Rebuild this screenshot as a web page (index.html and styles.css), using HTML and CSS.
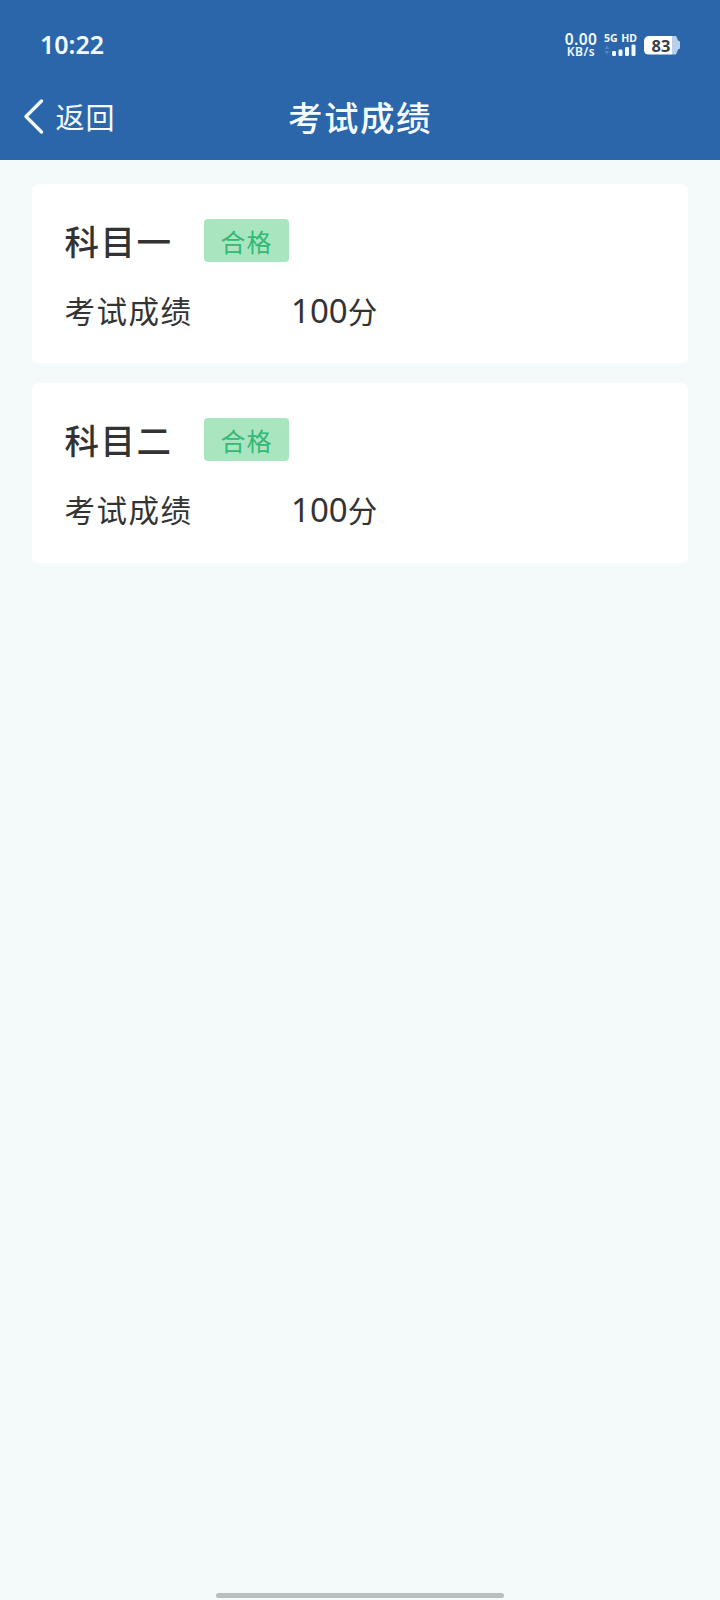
FILE: index.html
```html
<!DOCTYPE html>
<html lang="zh-CN">
<head>
<meta charset="utf-8">
<title>考试成绩</title>
<link rel="stylesheet" href="styles.css">
</head>
<body>
<header class="top">
  <div class="status">
    <span class="clock">10:22</span>
    <div class="indicators">
      <div class="speed"><span class="rate">0.00</span><span class="unit">KB/s</span></div>
      <div class="network">
        <span class="net-label">5G HD</span>
        <svg class="signal" width="32" height="12" viewBox="0 0 32 12">
          <path d="M0.500 5 3 1.500 5.500 5zM0.500 7 3 10.500 5.500 7z" fill="#5385c2"/>
          <g fill="#f1faff"><rect x="8" y="7" width="4" height="5" rx="1.300"/><rect x="14.500" y="5.500" width="4" height="6.500" rx="1.300"/><rect x="21" y="3" width="4" height="9" rx="1.300"/><rect x="27.500" y="0.500" width="4" height="11.500" rx="1.300"/></g>
        </svg>
      </div>
      <div class="battery"><span class="level">83</span></div>
    </div>
  </div>
  <nav class="nav">
    <a class="back">
      <svg class="chevron" width="20" height="36" viewBox="0 0 20 36"><path d="M17.500 3 2 18.500 17.500 34" fill="none" stroke="#f4fbff" stroke-width="3.300" stroke-linecap="round" stroke-linejoin="round"/></svg>
      <span class="back-text">返回</span>
    </a>
    <h1 class="title">考试成绩</h1>
  </nav>
</header>
<main class="list">
  <section class="card">
    <div class="card-head"><h2 class="subject">科目一</h2><span class="badge">合格</span></div>
    <div class="row"><span class="label">考试成绩</span><span class="score"><span class="num">100</span>分</span></div>
  </section>
  <section class="card">
    <div class="card-head"><h2 class="subject">科目二</h2><span class="badge">合格</span></div>
    <div class="row"><span class="label">考试成绩</span><span class="score"><span class="num">100</span>分</span></div>
  </section>
</main>
<footer class="home"><div class="home-bar"></div></footer>
</body>
</html>
```
FILE: styles.css
```css
* { box-sizing: border-box; margin: 0; padding: 0; }
body {
  height: 1600px;
  display: flex;
  flex-direction: column;
  background: #f4f9fa;
  color: #333;
  font-family: "Noto Sans CJK SC", sans-serif;
}
.top { height: 160px; background: #2b65aa; color: #f4fbff; }
.status {
  height: 76px;
  padding: 14px 40px 0 40px;
  display: flex;
  justify-content: space-between;
  align-items: center;
  font-family: "Noto Sans", sans-serif;
}
.clock { font-size: 25px; font-weight: 600; line-height: 30px; margin-top: -3px; }
.indicators { display: flex; align-items: center; }
.speed { width: 36px; display: flex; flex-direction: column; align-items: center; font-weight: 600; margin-right: 5px; }
.rate { font-size: 15.5px; line-height: 13px; height: 13px; letter-spacing: 0.4px; }
.unit { font-size: 12px; line-height: 12px; height: 12px; letter-spacing: 0.5px; }
.network { width: 34px; display: flex; flex-direction: column; margin-right: 6px; margin-top: -3px; }
.net-label { font-size: 10.5px; font-weight: 700; line-height: 12px; white-space: nowrap; word-spacing: 1px; }
.signal { display: block; }
.battery {
  width: 36px;
  height: 19px;
  padding-right: 2px;
  border-radius: 5px;
  background: linear-gradient(to right, #fff 28px, #b9cfea 28px);
  clip-path: polygon(0 0, 32px 0, 34px 5px, 36px 6px, 36px 13px, 34px 14px, 32px 19px, 0 19px);
  color: #3b4046;
  display: flex;
  justify-content: center;
  align-items: center;
}
.level { font-size: 16.5px; font-weight: 700; line-height: 19px; }
.nav { height: 84px; display: grid; grid-template-columns: 1fr 144px 1fr; align-items: center; }
.back { display: flex; align-items: center; padding-left: 24px; margin-top: -4px; }
.back-text { font-size: 29px; line-height: 40px; letter-spacing: 1px; margin-left: 11.5px; }
.title { font-size: 34.5px; font-weight: 500; line-height: 50px; letter-spacing: 1.5px; white-space: nowrap; margin-top: -4px; }
.list { flex: 1; padding: 24px 32px; display: flex; flex-direction: column; gap: 20px; }
.card { height: 179.3px; padding: 35px 32px 0; border-radius: 7px; background: #fff; }
.card-head { height: 43px; display: flex; align-items: center; }
.subject { width: 140px; padding-left: 0.5px; font-size: 34.5px; font-weight: 500; line-height: 42px; letter-spacing: 1.5px; margin-top: -2px; }
.badge {
  width: 85px;
  height: 43px;
  border-radius: 4px;
  background: #a9e6c0;
  color: #34b877;
  font-size: 25px;
  line-height: 44px;
  letter-spacing: 1px;
  text-align: center;
}
.row { display: flex; align-items: baseline; margin-top: 24px; font-size: 30.5px; line-height: 48px; }
.label { width: 227px; padding-left: 0.5px; letter-spacing: 1.5px; }
.score { font-size: 29.5px; }
.num { font-family: "Noto Sans", sans-serif; font-size: 33px; }
.home { height: 7px; display: flex; justify-content: center; }
.home-bar { width: 288px; height: 5px; border-radius: 3px; background: #b9bfc0; }
```
